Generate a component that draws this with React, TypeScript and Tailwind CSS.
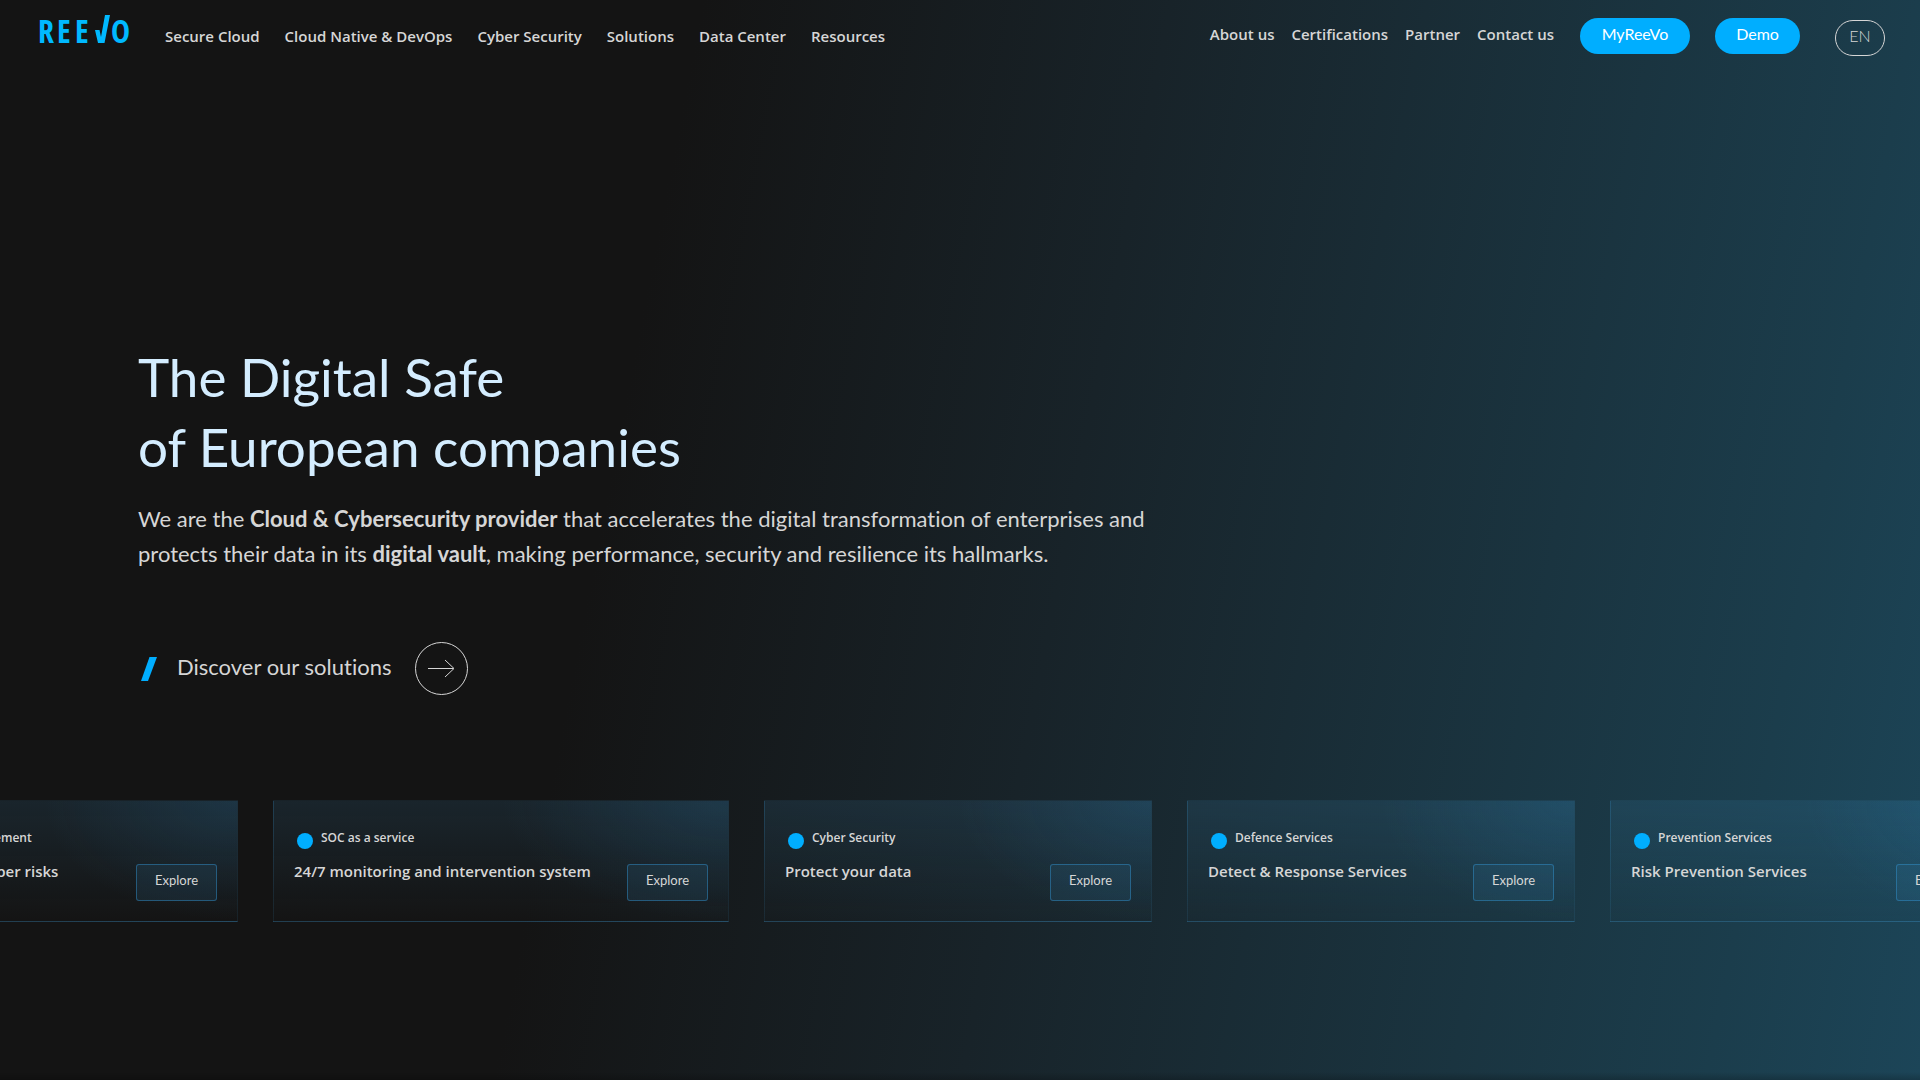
import { clsx } from 'clsx';

interface Service {
  label: string;
  title: string;
  wide?: boolean;
}

const mainLinks = [
  'Secure Cloud',
  'Cloud Native & DevOps',
  'Cyber Security',
  'Solutions',
  'Data Center',
  'Resources',
];

const sideLinks = ['About us', 'Certifications', 'Partner', 'Contact us'];

const services: Service[] = [
  { label: 'Exposure Management', title: 'Assess all your cyber risks' },
  { label: 'SOC as a service', title: '24/7 monitoring and intervention system', wide: true },
  { label: 'Cyber Security', title: 'Protect your data' },
  { label: 'Defence Services', title: 'Detect & Response Services' },
  { label: 'Prevention Services', title: 'Risk Prevention Services' },
];

function Logo() {
  return (
    <svg
      viewBox="0 0 92 30"
      className="h-[30px] w-[92px] overflow-visible fill-[#00b9ff] font-['Open_Sans_Condensed','Roboto_Condensed',sans-serif] text-[32px] font-bold"
      role="img"
      aria-label="ReeVo"
    >
      <text x="-2" y="29">R</text>
      <text x="17" y="29">E</text>
      <text x="35" y="29">E</text>
      <path d="M55 16h4.500l1.500 7L65 1h5L64.500 29H58z" />
      <text x="71" y="29">O</text>
    </svg>
  );
}

function Header() {
  return (
    <header className="flex items-start justify-between pl-10 pr-[35px] pt-[14px] font-['Open_Sans',sans-serif] text-[15px] leading-6 text-[#d6d6d6]">
      <div className="flex items-start gap-[33px]">
        <a href="#home">
          <Logo />
        </a>
        <nav className="flex gap-[25px] pt-2.5 font-semibold">
          {mainLinks.map(link => (
            <a key={link} href="#menu" className="hover:text-white">
              {link}
            </a>
          ))}
        </nav>
      </div>

      <div className="flex items-start pt-1">
        <nav className="mr-[26px] flex gap-[17px] pt-1 font-semibold">
          {sideLinks.map(link => (
            <a key={link} href="#menu" className="hover:text-white">
              {link}
            </a>
          ))}
        </nav>
        <div className="flex gap-[25px] font-['Lato',sans-serif] text-base text-white">
          <a href="#my" className="flex h-9 w-[110px] items-center justify-center rounded-full bg-[#00aeff] pb-1">
            MyReeVo
          </a>
          <a href="#demo" className="flex h-9 w-[85px] items-center justify-center rounded-full bg-[#00aeff] pb-1">
            Demo
          </a>
        </div>
        <button
          type="button"
          className="ml-[35px] mt-0.5 h-9 w-[50px] rounded-full border border-[#d6d6d6] pb-1 font-['Lato',sans-serif] text-base font-light"
        >
          EN
        </button>
      </div>
    </header>
  );
}

function Hero() {
  return (
    <section className="px-[138px] pt-[286px] font-['Lato',sans-serif] text-[22px] leading-[35px] text-[#d6d6d6] [font-variant-ligatures:none]">
      <h1 className="text-[53px] leading-[70px] text-[#d4edff]">
        The Digital Safe
        <br />
        of European companies
      </h1>
      <p className="mt-[19px] max-w-[1040px]">
        We are the <strong>Cloud &amp; Cybersecurity provider</strong> that accelerates the digital
        transformation of enterprises and protects their data in its <strong>digital vault</strong>,
        making performance, security and resilience its hallmarks.
      </p>
      <a href="#solutions" className="mt-[71px] inline-flex items-center pl-[3px]">
        <svg viewBox="0 0 16 24" className="mr-5 h-6 w-4 fill-[#00aeff]" aria-hidden="true">
          <path d="M8.500 0H16L7 24H0z" />
        </svg>
        <span className="pb-1">Discover our solutions</span>
        <svg viewBox="0 0 53 53" className="ml-6 size-[53px] fill-none stroke-[#d6d6d6]" aria-hidden="true">
          <circle cx="26.500" cy="26.500" r="26" strokeWidth="1" />
          <path d="M13 26.500h25.500M30 18l9 8.500-9 8.500" strokeWidth="1" />
        </svg>
      </a>
    </section>
  );
}

function ServiceCard({ label, title, wide }: Service) {
  return (
    <article
      className={clsx(
        'flex h-[122px] shrink-0 items-end justify-between border border-[#3c8cbe1f] border-b-[#3c8cbe40] pl-5 pr-5',
        'bg-[radial-gradient(ellipse_50%_100%_at_100%_0%,#3296d724,transparent),linear-gradient(to_bottom,#3c8cbe24,transparent)]',
        wide ? 'w-[456px]' : 'w-[388px]',
      )}
    >
      <div className="self-start pt-[27px] font-['Open_Sans',sans-serif] font-semibold text-[#d6d6d6]">
        <p className="flex items-start gap-2 pl-[3px] text-xs leading-5">
          <span className="mt-[5px] size-4 rounded-full bg-[#00aeff]" />
          {label}
        </p>
        <h2 className="mt-2.5 text-[15px] leading-6">{title}</h2>
      </div>
      <button
        type="button"
        className="mb-5 h-[37px] w-[81px] rounded-[3px] border border-[#3296d773] bg-[#3c8cbe1f] pb-1 font-['Lato',sans-serif] text-[13px] text-[#d6d6d6]"
      >
        Explore
      </button>
    </article>
  );
}

export default function App() {
  return (
    <div className="flex min-h-screen flex-col overflow-hidden bg-[linear-gradient(101deg,#141414_33%,#182329_55%,#1b3d4c_90%,#1c4558_100%)]">
      <Header />
      <main className="flex-1">
        <Hero />
        <section className="-ml-[150px] mt-[105px] flex gap-[35px]">
          {services.map(service => (
            <ServiceCard key={service.label} {...service} />
          ))}
        </section>
      </main>
      <div className="h-2 bg-linear-to-b from-transparent to-black/20" />
    </div>
  );
}
